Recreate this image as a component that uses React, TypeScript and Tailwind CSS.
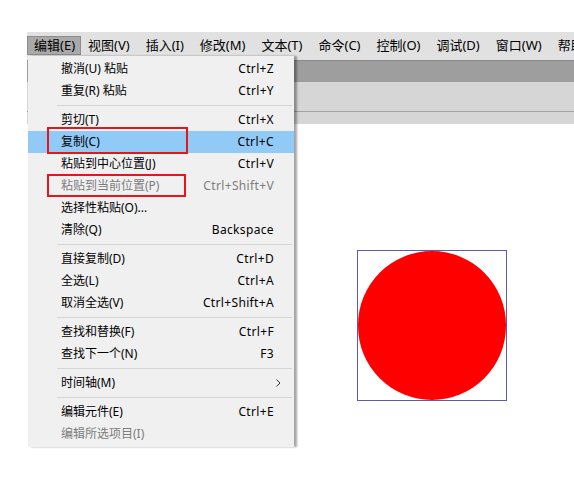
import React from "react"

type Item = {
    label: string
    shortcut?: string
    disabled?: boolean
    active?: boolean
    submenu?: boolean
}

const groups: Item[][] = [
    [
        { label: "撤消(U) 粘贴", shortcut: "Ctrl+Z" },
        { label: "重复(R) 粘贴", shortcut: "Ctrl+Y" },
    ],
    [
        { label: "剪切(T)", shortcut: "Ctrl+X" },
        { label: "复制(C)", shortcut: "Ctrl+C", active: true },
        { label: "粘贴到中心位置(J)", shortcut: "Ctrl+V" },
        { label: "粘贴到当前位置(P)", shortcut: "Ctrl+Shift+V", disabled: true },
        { label: "选择性粘贴(O)..." },
        { label: "清除(Q)", shortcut: "Backspace" },
    ],
    [
        { label: "直接复制(D)", shortcut: "Ctrl+D" },
        { label: "全选(L)", shortcut: "Ctrl+A" },
        { label: "取消全选(V)", shortcut: "Ctrl+Shift+A" },
    ],
    [
        { label: "查找和替换(F)", shortcut: "Ctrl+F" },
        { label: "查找下一个(N)", shortcut: "F3" },
    ],
    [{ label: "时间轴(M)", submenu: true }],
    [
        { label: "编辑元件(E)", shortcut: "Ctrl+E" },
        { label: "编辑所选项目(I)", disabled: true },
    ],
]

const menus = ["编辑(E)", "视图(V)", "插入(I)", "修改(M)", "文本(T)", "命令(C)", "控制(O)", "调试(D)", "窗口(W)", "帮助(H)"]

function MenuRow({ item }: { item: Item }) {
    return (
        <div
            className={
                "flex h-[22px] items-center justify-between pl-[33px] pr-[20px] " +
                (item.active ? "bg-[#91c9f7] " : "") +
                (item.disabled ? "text-[#7d7d7d]" : "text-black")
            }
        >
            <span>{item.label}</span>
            {item.shortcut && <span className="tracking-[0.35px]">{item.shortcut}</span>}
            {item.submenu && (
                <svg width="5" height="8" viewBox="0 0 5 8" className="mr-[-7px]">
                    <path d="M0.5 0.5 L4 4 L0.5 7.5" fill="none" stroke="#333" strokeWidth="1" />
                </svg>
            )}
        </div>
    )
}

export default function App() {
    return (
        <div
            className="relative h-[480px] w-[574px] overflow-hidden bg-white text-[12px] leading-none"
            style={{ fontFamily: '"Noto Sans", "Noto Sans CJK SC", sans-serif' }}
        >
            <div className="h-[32px]" />

            {/* window */}
            <div className="ml-[27px]">
                <div className="flex h-[28px] items-start overflow-hidden bg-[#e1e1e1] pt-[4px] text-[13px]">
                    {menus.map((m, i) => (
                        <div
                            key={m}
                            className={
                                "flex h-[19px] shrink-0 items-center whitespace-nowrap " +
                                (i === 0
                                    ? "mr-[-1px] border border-[#8c8c8c] bg-[#a9a9a9] pl-[6px] pr-[5px]"
                                    : "px-[8px]")
                            }
                        >
                            {m}
                        </div>
                    ))}
                </div>
                <div className="h-[22px] border-t border-[#8a8a8a] bg-[#9e9e9e]" />
                <div className="h-[29px] bg-[#d6d6d6]" />
                <div className="h-[13px] border-t border-[#a2a2a2] bg-[#d6d6d6]" />

                {/* stage */}
                <div className="pl-[330px] pt-[126px]">
                    <div className="h-[151px] w-[150px] border border-[#5b5bb5]">
                        <div className="h-full w-full rounded-full bg-[#ff0000]" />
                    </div>
                </div>
            </div>

            {/* dropdown */}
            <div className="absolute left-[28px] top-[56px] w-[266px] bg-[#f0f0f0] pb-[2px] pt-[2px] shadow-[3px_0_2px_rgba(0,0,0,0.35)]">
                {groups.map((g, gi) => (
                    <div key={gi}>
                        {gi > 0 && (
                            <div className="flex h-[7px] items-center pl-[29px] pr-[2px]">
                                <div className="h-px w-full bg-[#d5d5d5]" />
                            </div>
                        )}
                        {g.map(item => (
                            <MenuRow key={item.label} item={item} />
                        ))}
                    </div>
                ))}
            </div>

            {/* annotations */}
            <div className="absolute left-[47px] top-[127px] h-[27px] w-[141px] border-2 border-[#e8141c]" />
            <div className="absolute left-[47px] top-[174px] h-[23px] w-[139px] border-2 border-[#e8141c]" />
        </div>
    )
}
